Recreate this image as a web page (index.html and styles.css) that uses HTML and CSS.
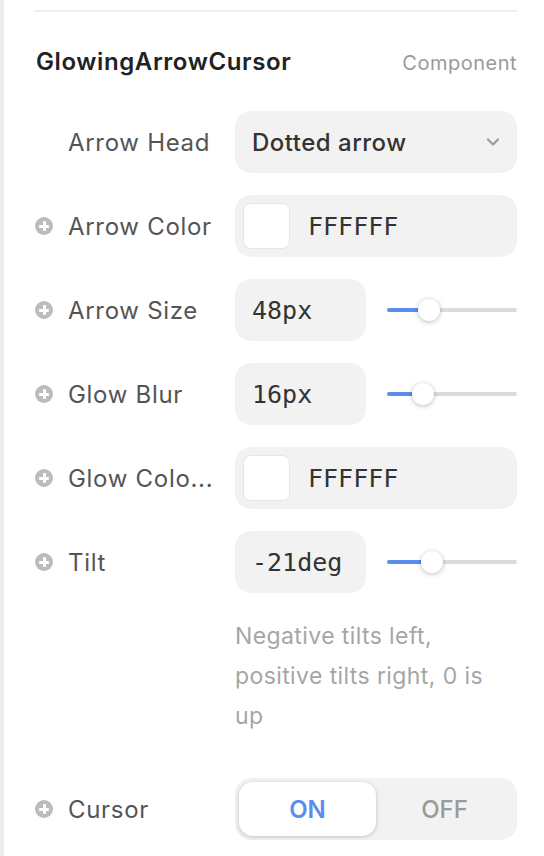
FILE: index.html
```html
<!DOCTYPE html>
<html lang="en">
<head>
    <meta charset="UTF-8">
    <meta name="viewport" content="width=device-width, initial-scale=1.0">
    <title>GlowingArrowCursor</title>
    <link rel="stylesheet" href="styles.css">
</head>
<body>
    <div class="panel">
        <div class="divider"></div>
        <div class="head">
            <span class="title">GlowingArrowCursor</span>
            <span class="kind">Component</span>
        </div>
        <div class="rows">
            <div class="row">
                <div class="label no-icon">Arrow Head</div>
                <div class="box select">
                    <span>Dotted arrow</span>
                    <svg class="chev" width="14" height="14" viewBox="0 0 14 14"><path d="M2 4.5 L7 9.5 L12 4.5" fill="none" stroke="#9a9a9a" stroke-width="2.2" stroke-linecap="round" stroke-linejoin="round"/></svg>
                </div>
            </div>
            <div class="row">
                <div class="label"><i class="plus"></i>Arrow Color</div>
                <div class="box color">
                    <span class="swatch"></span>
                    <span class="mono">FFFFFF</span>
                </div>
            </div>
            <div class="row">
                <div class="label"><i class="plus"></i>Arrow Size</div>
                <div class="pair">
                    <div class="box num mono">48px</div>
                    <div class="slider"><div class="fill" style="width:42px"></div><div class="thumb" style="left:42px"></div></div>
                </div>
            </div>
            <div class="row">
                <div class="label"><i class="plus"></i>Glow Blur</div>
                <div class="pair">
                    <div class="box num mono">16px</div>
                    <div class="slider"><div class="fill" style="width:36px"></div><div class="thumb" style="left:36px"></div></div>
                </div>
            </div>
            <div class="row">
                <div class="label"><i class="plus"></i>Glow Colo...</div>
                <div class="box color">
                    <span class="swatch"></span>
                    <span class="mono">FFFFFF</span>
                </div>
            </div>
            <div class="row">
                <div class="label"><i class="plus"></i>Tilt</div>
                <div class="pair">
                    <div class="box num mono">-21deg</div>
                    <div class="slider"><div class="fill" style="width:45px"></div><div class="thumb" style="left:45px"></div></div>
                </div>
            </div>
            <div class="row help-row">
                <div></div>
                <p class="help">Negative tilts left, positive tilts right, 0 is up</p>
            </div>
            <div class="row">
                <div class="label"><i class="plus"></i>Cursor</div>
                <div class="box toggle">
                    <span class="opt on">ON</span>
                    <span class="opt">OFF</span>
                </div>
            </div>
        </div>
    </div>
</body>
</html>
```

FILE: styles.css
```css
*{
    margin: 0;
    padding: 0;
    box-sizing: border-box;
}
body{
    background: #fff;
    font-family: Inter, "Liberation Sans", sans-serif;
}
.panel{
    min-height: 856px;
    border-left: 4px solid #ededed;
    padding: 10px 27px 0 30px;
}
.divider{
    height: 2px;
    background: #efefef;
}
.head{
    height: 99px;
    display: flex;
    align-items: center;
    justify-content: space-between;
    padding-left: 2px;
}
.title{
    font-size: 24px;
    font-weight: 600;
    letter-spacing: 0.6px;
    color: #222;
}
.kind{
    font-size: 20px;
    letter-spacing: 0.5px;
    color: #9a9a9a;
    padding-top: 3px;
}
.rows{
    display: flex;
    flex-direction: column;
    gap: 22px;
}
.row{
    display: grid;
    grid-template-columns: 201px 282px;
    align-items: center;
}
.label{
    display: flex;
    align-items: center;
    gap: 15px;
    padding-left: 1px;
    font-size: 24px;
    letter-spacing: 0.7px;
    color: #555;
    white-space: nowrap;
}
.label.no-icon{
    padding-left: 34px;
}
.plus{
    position: relative;
    width: 18px;
    height: 18px;
    border-radius: 50%;
    background: #bcbcbc;
    flex: none;
}
.plus::before,.plus::after{
    content: "";
    position: absolute;
    background: #fff;
    border-radius: 1px;
}
.plus::before{
    left: 4px;
    top: 7.5px;
    width: 10px;
    height: 3px;
}
.plus::after{
    left: 7.5px;
    top: 4px;
    width: 3px;
    height: 10px;
}
.box{
    height: 62px;
    background: #f2f2f2;
    border-radius: 16px;
    display: flex;
    align-items: center;
}
.mono{
    font-family: "DejaVu Sans Mono", "Liberation Mono", monospace;
    font-size: 25px;
    color: #333;
}
.select{
    justify-content: space-between;
    padding: 0 17px;
    font-size: 24px;
    letter-spacing: 0.5px;
    font-weight: 500;
    color: #333;
}
.color{
    padding-left: 8px;
    gap: 18px;
}
.swatch{
    width: 47px;
    height: 46px;
    background: #fff;
    border: 1px solid #e6e6e6;
    border-radius: 8px;
}
.pair{
    display: flex;
    align-items: center;
    gap: 21px;
}
.num{
    width: 131px;
    padding-left: 17px;
}
.slider{
    position: relative;
    flex: 1;
    height: 4px;
    background: #dcdcdc;
    border-radius: 2px;
}
.fill{
    height: 4px;
    background: #5b8def;
    border-radius: 2px;
}
.thumb{
    position: absolute;
    top: -9px;
    width: 22px;
    height: 22px;
    margin-left: -11px;
    border-radius: 50%;
    background: #fff;
    box-shadow: 0 1px 5px rgba(0,0,0,0.28);
}
.help-row{
    margin-top: 1px;
}
.help{
    font-size: 23px;
    letter-spacing: 0.4px;
    line-height: 40px;
    color: #a6a6a6;
    padding-bottom: 20px;
}
.toggle{
    padding: 4px;
}
.opt{
    flex: 1;
    height: 54px;
    display: flex;
    align-items: center;
    justify-content: center;
    font-size: 24px;
    font-weight: 500;
    color: #9a9a9a;
}
.opt.on{
    background: #fff;
    color: #5b8def;
    font-weight: 600;
    border-radius: 14px;
    box-shadow: 0 1px 4px rgba(0,0,0,0.2);
}
```
